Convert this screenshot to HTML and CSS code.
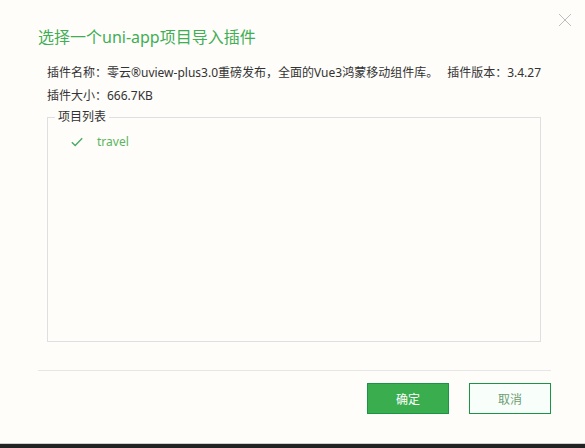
FILE: index.html
```html
<!DOCTYPE html>
<html lang="zh-CN">
<head>
    <meta charset="UTF-8">
    <meta name="viewport" content="width=device-width, initial-scale=1.0">
    <title>导入插件</title>
    <link rel="stylesheet" href="styles.css">
</head>
<body>
    <div class="dialog">
        <button class="close" title="关闭">
            <svg width="14" height="14" viewBox="0 0 14 14"><path d="M1 1L13 13M13 1L1 13" stroke="#bdbdbd" stroke-width="1" fill="none"/></svg>
        </button>
        <h1>选择一个uni-app项目导入插件</h1>
        <div class="info">
            <p>插件名称：零云®uview-plus3.0重磅发布，全面的Vue3鸿蒙移动组件库。<span class="version">插件版本：3.4.27</span></p>
            <p>插件大小：666.7KB</p>
        </div>
        <fieldset class="project-box">
            <legend>项目列表</legend>
            <div class="project-item">
                <svg class="check" width="12" height="10" viewBox="0 0 12 10"><path d="M0.8 5.2L4.2 8.4L11.2 1.2" stroke="#4ea862" stroke-width="1.4" fill="none"/></svg>
                <span>travel</span>
            </div>
        </fieldset>
        <div class="divider"></div>
        <div class="actions">
            <button class="btn btn-primary">确定</button>
            <button class="btn btn-default">取消</button>
        </div>
    </div>
    <div class="taskbar"></div>
</body>
</html>
```

FILE: styles.css
```css
body {
    margin: 0;
    padding: 0;
    font-family: "Noto Sans", "Noto Sans CJK SC", sans-serif;
    font-size: 12px;
    color: #333;
    background-color: #fefdfa;
    width: 585px;
    height: 448px;
    overflow: hidden;
}
.dialog {
    position: relative;
    height: 443px;
    box-sizing: border-box;
    background-color: #fefdfa;
}
.close {
    position: absolute;
    top: 13px;
    left: 558px;
    width: 14px;
    height: 14px;
    padding: 0;
    border: none;
    background: none;
    cursor: pointer;
}
.close svg {
    display: block;
}
h1 {
    margin: 0;
    padding: 27px 0 0 38px;
    font-size: 16px;
    line-height: 20px;
    font-weight: normal;
    color: #3fae55;
}
.info {
    margin: 14px 0 0 47px;
}
.info p {
    margin: 0;
    line-height: 23px;
}
.version {
    margin-left: 9px;
}
.project-box {
    margin: 2px 0 0 47px;
    padding: 0;
    width: 494px;
    height: 233px;
    box-sizing: border-box;
    border: 1px solid #dfdfe3;
    min-width: 0;
}
.project-box legend {
    margin-left: 7px;
    padding: 0 3px;
    line-height: 16px;
    color: #333;
}
.project-item {
    display: flex;
    align-items: center;
    padding: 7px 0 0 23px;
    line-height: 20px;
    color: #5ab55f;
}
.check {
    margin-right: 14px;
}
.divider {
    margin: 28px 0 0 38px;
    width: 513px;
    height: 1px;
    background-color: #e6e6e6;
}
.actions {
    display: flex;
    justify-content: flex-end;
    gap: 20px;
    width: 551px;
    margin-top: 12px;
}
.btn {
    width: 82px;
    height: 31px;
    font-family: inherit;
    font-size: 12px;
    border-radius: 0;
    cursor: pointer;
}
.btn-primary {
    background-color: #3aae4f;
    border: 1px solid #1a9446;
    color: #fff;
}
.btn-default {
    background-color: #f8fffa;
    border: 1px solid #1a9446;
    color: #6e9c73;
}
.taskbar {
    height: 4px;
    border-top: 1px solid #cfcfcf;
    background-color: #222;
}
```
